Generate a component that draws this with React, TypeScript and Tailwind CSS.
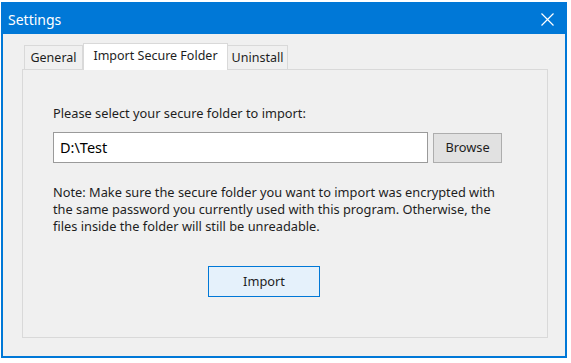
export default function App() {
  return (
    <div className="w-[571px] h-[363px] bg-white pt-[2px] pl-[1px]" style={{ fontFamily: '"Noto Sans", "Open Sans", sans-serif' }}>
      <div className="w-[566px] h-[356px] border-2 border-[#0078d7] flex flex-col bg-[#f0f0f0]">
        {/* title bar */}
        <div className="h-[30px] bg-[#0078d7] flex items-center justify-between pl-[5px] pr-[11px]">
          <span className="text-white text-[14px]">Settings</span>
          <svg width="13" height="13" viewBox="0 0 13 13" className="text-white">
            <path d="M0.5 0.5L12.5 12.5M12.5 0.5L0.5 12.5" stroke="currentColor" strokeWidth="1.2" />
          </svg>
        </div>

        <div className="flex-1 pl-[19px] pt-[8px]">
          {/* tabs */}
          <div className="flex items-end h-[27px] pl-[2px] text-[12.5px] text-[#1e1e1e]">
            <div className="w-[59px] h-[24px] border border-b-0 border-[#d9d9d9] bg-[#f0f0f0] flex items-center justify-center pt-[2px]">
              General
            </div>
            <div className="w-[145px] h-[27px] -mb-px relative z-10 border border-b-0 border-[#d9d9d9] bg-white flex items-center justify-center pb-[2px]">
              Import Secure Folder
            </div>
            <div className="w-[60px] h-[24px] border border-b-0 border-l-0 border-[#d9d9d9] bg-[#f0f0f0] flex items-center justify-center pt-[2px]">
              Uninstall
            </div>
          </div>

          {/* tab page */}
          <div className="w-[526px] h-[269px] border border-[#d9d9d9] pl-[30px] pt-[35px] text-[12.8px] text-[#1e1e1e]">
            <div className="leading-[16px]">Please select your secure folder to import:</div>

            <div className="flex mt-[11px] gap-[5px]">
              <div className="w-[375px] h-[31px] bg-white border border-[#9a9a9a] flex items-center pl-[6px] text-[14.5px] text-black">
                D:\Test
              </div>
              <div className="w-[69px] h-[30px] mt-px bg-[#e1e1e1] border border-[#adadad] flex items-center justify-center">
                Browse
              </div>
            </div>

            <div className="mt-[21px] leading-[17px] w-[448px]">
              Note: Make sure the secure folder you want to import was encrypted with the same password you currently used with this program. Otherwise, the files inside the folder will still be unreadable.
            </div>

            <div className="ml-[155px] mt-[31px] w-[112px] h-[31px] bg-[#e5f1fb] border border-[#0078d7] flex items-center justify-center">
              Import
            </div>
          </div>
        </div>
      </div>
    </div>
  );
}
